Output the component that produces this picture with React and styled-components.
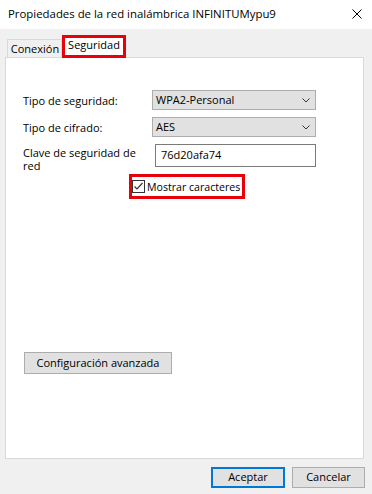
import React from "react";
import styled, { createGlobalStyle } from "styled-components";

const Global = createGlobalStyle`
  * { box-sizing: border-box; }
  html, body { margin: 0; padding: 0; background: #f0f0f0; }
  body { font-family: "Open Sans", "Noto Sans", sans-serif; font-size: 11px; color: #000; }
`;

const Window = styled.div`
  width: 372px;
  height: 494px;
  display: flex;
  flex-direction: column;
  background: #f0f0f0;
`;

const TitleBar = styled.div`
  height: 29px;
  background: #fff;
  display: flex;
  align-items: center;
  justify-content: space-between;
  padding: 0 10px 1px 8px;
`;

const Title = styled.span`
  font-size: 11.4px;
  line-height: 14px;
`;

const CloseIcon = styled.svg`
  width: 10px;
  height: 10px;
  display: block;
`;

const Body = styled.div`
  flex: 1;
  display: flex;
  flex-direction: column;
  padding: 6px 8px 0 5px;
`;

const TabBar = styled.div`
  display: flex;
  align-items: flex-end;
  padding-left: 2px;
  height: 23px;
  margin-bottom: -1px;
  position: relative;
  z-index: 1;
`;

const Tab = styled.div`
  display: flex;
  align-items: center;
  justify-content: center;
  white-space: nowrap;
  background: ${(p) => (p.$active ? "#fff" : "#f0f0f0")};
  border: ${(p) => (p.$active ? "3px solid #e8000b" : "1px solid #d9d9d9")};
  border-bottom: ${(p) => (p.$active ? "3px solid #e8000b" : "none")};
  height: ${(p) => (p.$active ? "23px" : "18px")};
  width: ${(p) => p.$w}px;
  margin-bottom: ${(p) => (p.$active ? "0" : "1px")};
  padding-bottom: ${(p) => (p.$active ? "3px" : "0")};
  padding-left: ${(p) => (p.$active ? "0" : "1px")};
  line-height: 14px;
`;

const Panel = styled.div`
  height: 402px;
  background: #fff;
  border: 1px solid #d9d9d9;
  padding: 32px 17px 0 17px;
  display: flex;
  flex-direction: column;
  align-items: flex-start;
`;

const FormGrid = styled.div`
  display: grid;
  grid-template-columns: 129px 164px;
  row-gap: 7px;
  align-items: center;
`;

const Label = styled.div`
  line-height: 13px;
  white-space: nowrap;
  align-self: ${(p) => (p.$top ? "start" : "center")};
  padding-top: ${(p) => (p.$top ? "2px" : "0")};
  height: ${(p) => (p.$top ? "23px" : "auto")};
  overflow: visible;
`;

const Select = styled.div`
  height: 20px;
  background: #e1e1e1;
  border: 1px solid #adadad;
  display: flex;
  align-items: center;
  justify-content: space-between;
  padding: 0 5px 0 3px;
  line-height: 14px;
`;

const Chevron = styled.svg`
  width: 8px;
  height: 5px;
  display: block;
`;

const TextBox = styled.div`
  height: 23px;
  margin-left: 3px;
  border: 1px solid #7a7a7a;
  background: #fff;
  display: flex;
  align-items: center;
  padding: 0 5px 2px;
  line-height: 14px;
`;

const CheckRow = styled.div`
  margin-top: 7px;
  margin-left: 106px;
  height: 25px;
  border: 3px solid #e8000b;
  display: flex;
  align-items: center;
  padding: 0 2px 0 0;
  gap: 2px;
  white-space: nowrap;
  line-height: 14px;
  font-size: 10.6px;
`;

const Box = styled.div`
  width: 13px;
  height: 13px;
  border: 1px solid #333;
  background: #fff;
  display: flex;
  align-items: center;
  justify-content: center;
`;

const Button = styled.div`
  height: ${(p) => p.$h || 21}px;
  width: ${(p) => p.$w}px;
  background: #e1e1e1;
  border: ${(p) => (p.$default ? "2px solid #0078d7" : "1px solid #adadad")};
  display: flex;
  align-items: center;
  justify-content: center;
  white-space: nowrap;
  line-height: 14px;
  padding-bottom: 1px;
`;

const AdvancedButton = styled(Button)`
  margin-top: 153px;
  margin-left: 1px;
`;

const Footer = styled.div`
  display: flex;
  justify-content: flex-end;
  gap: 7px;
  margin-top: 8px;
  margin-right: -1px;
`;

export default function App() {
  return (
    <>
      <Global />
      <Window>
        <TitleBar>
          <Title>Propiedades de la red inalámbrica INFINITUMypu9</Title>
          <CloseIcon viewBox="0 0 10 10">
            <path d="M0.5 0.5 L9.5 9.5 M9.5 0.5 L0.5 9.5" stroke="#000" strokeWidth="1" fill="none" />
          </CloseIcon>
        </TitleBar>
        <Body>
          <TabBar>
            <Tab $w={55}>Conexión</Tab>
            <Tab $active $w={64}>Seguridad</Tab>
          </TabBar>
          <Panel>
            <FormGrid>
              <Label>Tipo de seguridad:</Label>
              <Select>
                <span>WPA2-Personal</span>
                <Chevron viewBox="0 0 8 5">
                  <path d="M0.5 0.5 L4 4 L7.5 0.5" stroke="#333" strokeWidth="1" fill="none" />
                </Chevron>
              </Select>
              <Label>Tipo de cifrado:</Label>
              <Select>
                <span>AES</span>
                <Chevron viewBox="0 0 8 5">
                  <path d="M0.5 0.5 L4 4 L7.5 0.5" stroke="#333" strokeWidth="1" fill="none" />
                </Chevron>
              </Select>
              <Label $top>
                Clave de seguridad de
                <br />
                red
              </Label>
              <TextBox>76d20afa74</TextBox>
            </FormGrid>
            <CheckRow>
              <Box>
                <svg width="11" height="11" viewBox="0 0 11 11">
                  <path d="M1.5 5.5 L4 8 L9.5 2" stroke="#333" strokeWidth="1.2" fill="none" />
                </svg>
              </Box>
              <span>Mostrar caracteres</span>
            </CheckRow>
            <AdvancedButton $w={148} $h={22}>Configuración avanzada</AdvancedButton>
          </Panel>
          <Footer>
            <Button $default $w={74}>Aceptar</Button>
            <Button $w={73}>Cancelar</Button>
          </Footer>
        </Body>
      </Window>
    </>
  );
}
